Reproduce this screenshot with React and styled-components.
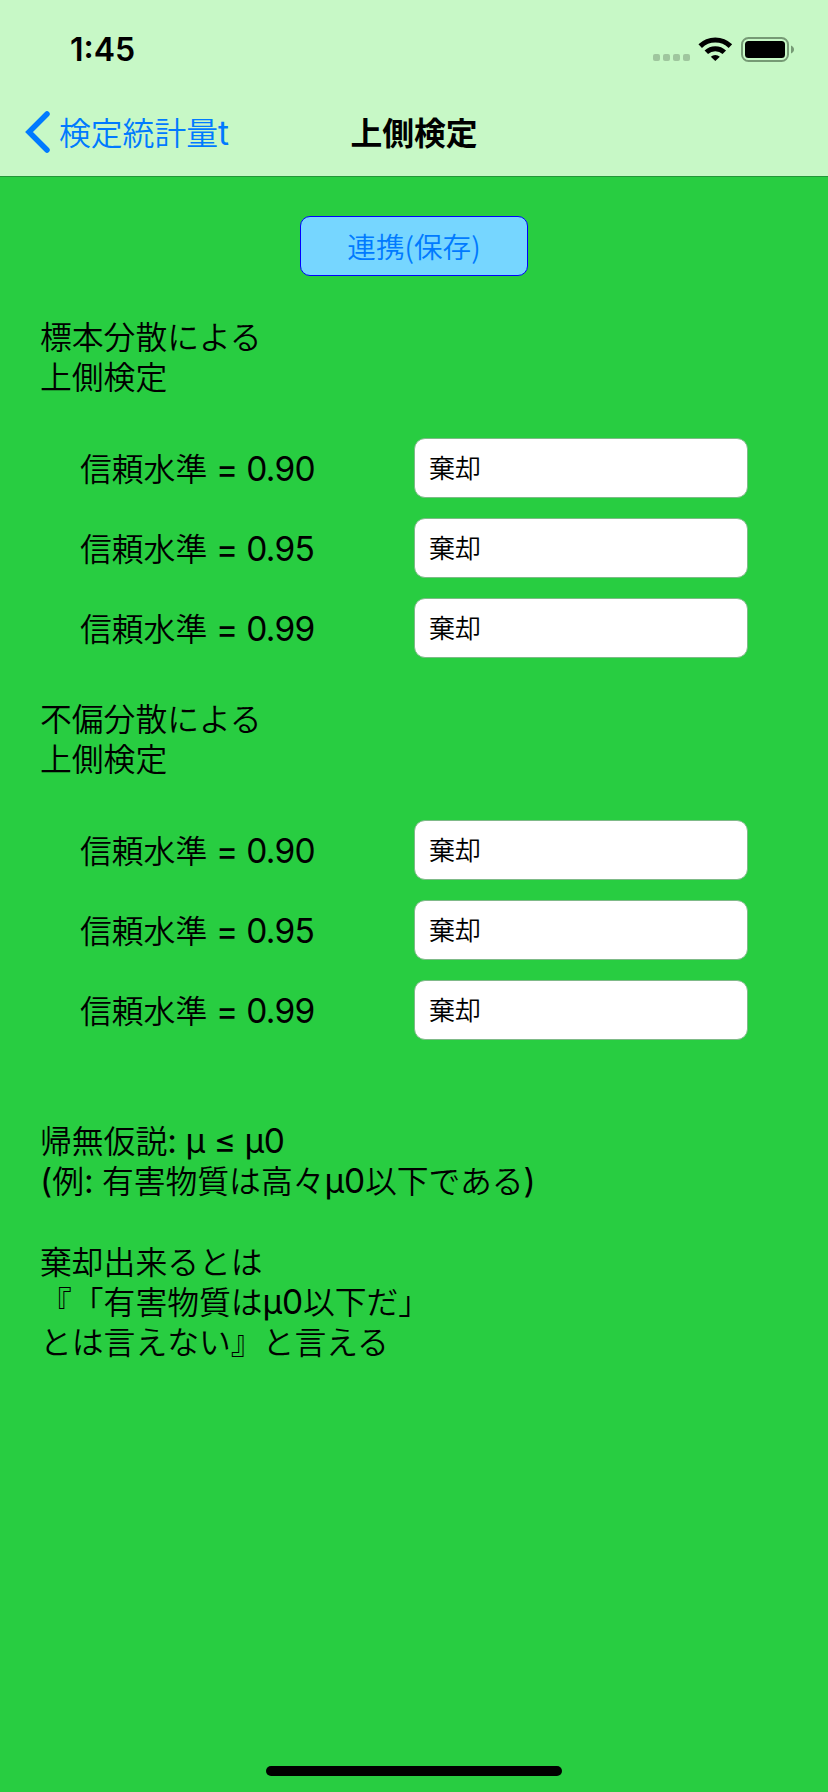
import React from "react";
import styled, { createGlobalStyle } from "styled-components";

const GlobalStyle = createGlobalStyle`
  * {
    box-sizing: border-box;
  }

  body {
    margin: 0;
    background: #28cd41;
  }
`;

const Screen = styled.div`
  display: flex;
  flex-direction: column;
  width: 828px;
  height: 1792px;
  overflow: hidden;
  background: #28cd41;
  color: #000;
  font-family: "Noto Sans CJK JP", sans-serif;
  font-weight: 350;
  text-spacing-trim: space-all;
`;

const Header = styled.header`
  height: 177px;
  background: #c7f8c6;
  border-bottom: 1px solid #229638;
`;

const StatusBar = styled.div`
  display: flex;
  justify-content: space-between;
  align-items: center;
  height: 88px;
  padding: 12px 34px 0 70px;
`;

const Time = styled.span`
  font-family: Inter, sans-serif;
  font-size: 32px;
  font-weight: 600;
  line-height: 40px;
`;

const NavBar = styled.nav`
  display: grid;
  grid-template-columns: 1fr auto 1fr;
  align-items: center;
  height: 88px;
  padding: 0 25px;
`;

const BackButton = styled.button`
  display: flex;
  align-items: center;
  gap: 8px;
  padding: 0;
  border: 0;
  background: none;
  color: #007aff;
  font: inherit;
  font-size: 31.8px;
  line-height: 40px;
`;

const BackLabel = styled.span`
  padding-bottom: 3px;
`;

const Title = styled.h1`
  margin: 0 0 3px;
  font-size: 31.8px;
  font-weight: 700;
  line-height: 40px;
`;

// 英数字だけ別フォント
const Latin = styled.span`
  font-family: Inter, sans-serif;
  font-size: 33.5px;
  font-weight: 400;
  line-height: 0;
  letter-spacing: ${(p) => p.$spacing || 0}px;
`;

const Main = styled.main`
  display: flex;
  flex-direction: column;
  flex: 1;
  padding: 39px 40px 0;
`;

const SaveButton = styled.button`
  align-self: center;
  width: 228px;
  height: 60px;
  padding: 0;
  border: 1px solid #0000ff;
  border-radius: 10px;
  background: #76d6ff;
  color: #007aff;
  font: inherit;
  font-size: 28.6px;
  line-height: 58px;
`;

const Sections = styled.div`
  margin-top: 39px;
`;

const Section = styled.section`
  height: 382px;
`;

const Heading = styled.h2`
  margin: 0 0 43px;
  font-size: 31.8px;
  font-weight: 350;
  line-height: 40px;
  white-space: pre-line;
`;

const Row = styled.label`
  display: grid;
  grid-template-columns: 334px 334px;
  align-items: center;
  height: 60px;
  margin: 0 0 20px 40px;
  font-size: 31.8px;
  line-height: 40px;
  white-space: pre;
`;

const RowLabel = styled.span`
  padding-bottom: 3px;
`;

const Field = styled.input`
  width: 334px;
  height: 60px;
  padding: 0 14px 4px;
  border: 1px solid #7fba88;
  border-radius: 11px;
  background: #fff;
  color: #000;
  font: inherit;
  font-size: 26px;
  outline: none;
`;

const Note = styled.p`
  margin: 40px 0 0;
  font-size: 31.8px;
  line-height: 40.3px;
  white-space: pre;
`;

const HomeIndicator = styled.div`
  align-self: center;
  width: 296px;
  height: 10px;
  margin: auto 0 16px;
  border-radius: 5px;
  background: #000;
`;

const STATUS_ICONS = (
  <svg width="142" height="26" viewBox="0 0 142 26" aria-hidden="true">
    <g fill="#9fc69e">
      <rect x="1" y="17" width="7" height="7" rx="2" />
      <rect x="11" y="17" width="7" height="7" rx="2" />
      <rect x="21" y="17" width="7" height="7" rx="2" />
      <rect x="31" y="17" width="7" height="7" rx="2" />
    </g>
    <g fill="none" stroke="#000" strokeWidth="5">
      <path d="M48.2 9.1a21.5 21.5 0 0 1 30.2 0" />
      <path d="M54.3 15.3a13 13 0 0 1 18 0" />
    </g>
    <path d="M58.8 19.7a6.6 6.6 0 0 1 9 0L63.3 24z" />
    <rect x="90" y="1" width="46" height="23" rx="6.5" fill="none" stroke="#769a75" strokeWidth="2" />
    <rect x="93" y="4" width="40" height="17" rx="3.5" />
    <path d="M139 8.5c4 1.6 4 6.4 0 8z" fill="#769a75" />
  </svg>
);

const CHEVRON = (
  <svg width="26" height="44" viewBox="0 0 26 44" aria-hidden="true">
    <path
      d="M22 4L4 22l18 18"
      fill="none"
      stroke="currentColor"
      strokeWidth="5.5"
      strokeLinecap="round"
      strokeLinejoin="miter"
    />
  </svg>
);

const levels = ["0.90", "0.95", "0.99"];

const groups = [
  { id: "sample", title: "標本分散による\n上側検定" },
  { id: "unbiased", title: "不偏分散による\n上側検定" },
];

const App = () => {
  return (
    <Screen>
      <GlobalStyle />
      <Header>
        <StatusBar>
          <Time>1:45</Time>
          {STATUS_ICONS}
        </StatusBar>
        <NavBar>
          <BackButton type="button">
            {CHEVRON}
            <BackLabel>
              検定統計量<Latin>t</Latin>
            </BackLabel>
          </BackButton>
          <Title>上側検定</Title>
        </NavBar>
      </Header>

      <Main>
        <SaveButton type="button">連携(保存)</SaveButton>

        <Sections>
          {groups.map((g) => (
            <Section key={g.id}>
              <Heading>{g.title}</Heading>
              {levels.map((level) => (
                <Row key={level}>
                  <RowLabel>
                    信頼水準<Latin $spacing={-0.7}> = {level}</Latin>
                  </RowLabel>
                  <Field defaultValue="棄却" />
                </Row>
              ))}
            </Section>
          ))}
        </Sections>

        <Note>
          帰無仮説<Latin $spacing={-0.4}>: μ ≤ μ0</Latin>
          {"\n"}
          <Latin>(</Latin>例<Latin $spacing={-0.6}>: </Latin>有害物質は高々<Latin $spacing={-0.2}>μ0</Latin>以下である<Latin>)</Latin>
          {"\n\n"}
          棄却出来るとは{"\n"}
          『「有害物質は<Latin $spacing={-0.2}>μ0</Latin>以下だ」{"\n"}
          とは言えない』と言える
        </Note>

        <HomeIndicator />
      </Main>
    </Screen>
  );
};

export default App;
